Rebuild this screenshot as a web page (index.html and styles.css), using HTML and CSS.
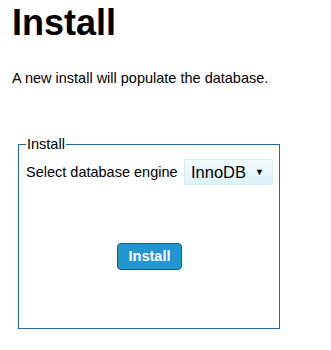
FILE: index.html
```html
<!DOCTYPE html>
<html lang="en">
<head>
    <meta charset="UTF-8">
    <title>Install</title>
    <link rel="stylesheet" href="styles.css">
</head>
<body>
    <h1>Install</h1>
    <p class="intro">A new install will populate the database.</p>

    <form class="install-form">
        <fieldset>
            <legend>Install</legend>
            <div class="engine-row">
                <label for="engine">Select database engine</label>
                <div class="select-box">
                    <select id="engine">
                        <option>InnoDB</option>
                        <option>MyISAM</option>
                    </select>
                    <span class="arrow">&#9660;</span>
                </div>
            </div>
            <div class="actions">
                <button type="submit" class="install-btn">Install</button>
            </div>
        </fieldset>
    </form>
</body>
</html>
```

FILE: styles.css
```css
body {
    font-family: "Liberation Sans", Arial, sans-serif;
    color: #000;
    background-color: #fff;
    margin: 0;
    padding: 0 12px;
}
h1 {
    font-size: 36px;
    font-weight: bold;
    margin: 2px 0 0;
}
.intro {
    font-size: 14.5px;
    margin: 26px 0 0;
}
.install-form {
    margin: 50px 0 0 6px;
}
fieldset {
    width: 262px;
    height: 193px;
    box-sizing: border-box;
    margin: 0;
    padding: 7px 6px 6px 7px;
    border: 1px solid #1a6fa0;
}
legend {
    font-size: 14.5px;
    padding: 0 1px;
}
.engine-row {
    display: flex;
    align-items: center;
    justify-content: space-between;
    font-size: 14.5px;
}
.engine-row label {
    white-space: nowrap;
}
.select-box {
    position: relative;
}
select {
    appearance: none;
    width: 89px;
    height: 26px;
    padding: 0 6px;
    font-family: inherit;
    font-size: 16.5px;
    border: 1px solid #d4eef6;
    border-radius: 0;
    background: linear-gradient(#f2fbfe, #dcf3fa);
    color: #000;
}
.arrow {
    position: absolute;
    right: 9px;
    top: 8px;
    font-size: 9px;
    pointer-events: none;
}
.actions {
    text-align: center;
    margin-top: 58px;
}
.install-btn {
    font-family: inherit;
    font-size: 14.5px;
    font-weight: bold;
    color: #fff;
    background-color: #2196d1;
    border: 1px solid #155f8c;
    border-radius: 4px;
    padding: 4px 11px 5px;
}
```
